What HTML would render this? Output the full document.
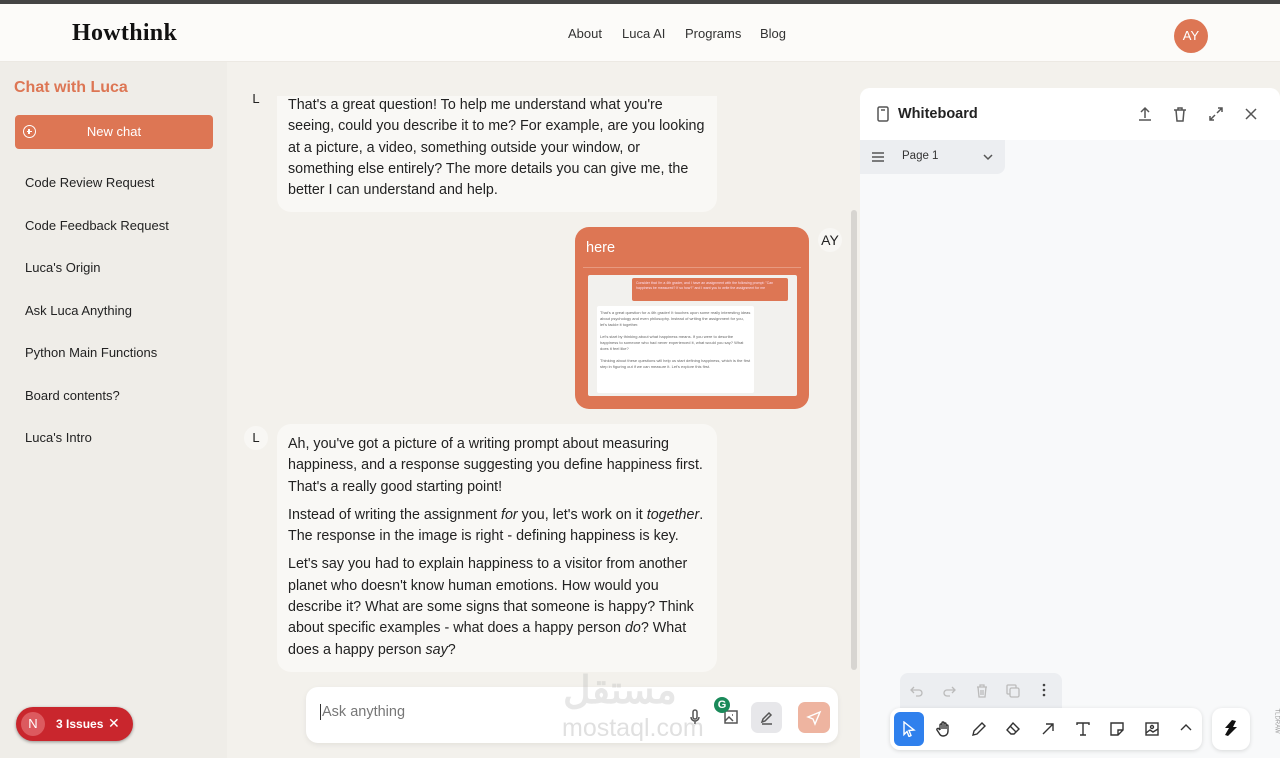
<!DOCTYPE html>
<html><head><meta charset="utf-8"><style>
*{margin:0;padding:0;box-sizing:border-box}
body{width:1280px;height:758px;overflow:hidden;font-family:"Liberation Sans",sans-serif;background:#f3f1ec;position:relative;color:#222}
.top{position:absolute;left:0;top:0;width:1280px;height:62px;background:#fcfbf9;border-top:4px solid #444;border-bottom:1px solid #ece9e3}
.logo{position:absolute;left:72px;top:16px;font-family:"Liberation Serif",serif;font-weight:bold;font-size:24px;letter-spacing:0.3px;color:#111}
.nav{position:absolute;top:22px;font-size:13px;color:#333}
.av{position:absolute;left:1174px;top:15px;width:34px;height:34px;border-radius:50%;background:#dd7654;color:#fff;font-size:13px;text-align:center;line-height:34px}
.side{position:absolute;left:0;top:62px;width:227px;height:696px;background:#efede8}
.side h2{position:absolute;left:14px;top:17px;font-size:16px;color:#dd7654;font-weight:bold}
.nc{position:absolute;left:15px;top:53px;width:198px;height:34px;background:#dd7654;border-radius:4px;color:#fff;font-size:13px;line-height:34px;text-align:center}
.nc i{position:absolute;left:8px;top:10px;width:13px;height:13px;border:1.5px solid #fff;border-radius:50%}
.nc i:before{content:"";position:absolute;left:2.5px;top:4.5px;width:5px;height:1.5px;background:#fff}
.nc i:after{content:"";position:absolute;left:4.3px;top:2.7px;width:1.5px;height:5px;background:#fff}
.it{position:absolute;left:25px;font-size:13px;color:#222}
.bub{position:absolute;background:#f9f8f5;border-radius:14px;font-size:14.3px;line-height:21.3px;color:#222;padding:0 11px}
.bub p{margin-bottom:7px}
.L{position:absolute;width:24px;height:24px;border-radius:50%;background:#f8f7f4;font-size:13px;text-align:center;line-height:24px}
.wb{position:absolute;left:860px;top:88px;width:420px;height:670px;background:#f8f9fa;border-radius:10px 10px 0 0}
.wbh{height:52px;background:#fff;border-radius:10px 10px 0 0;position:relative}
.ic{position:absolute;stroke:#555;fill:none;stroke-width:1.5}
.tb{position:absolute;top:13px;stroke:#333;fill:none;stroke-width:1.4}
.ut{position:absolute;top:11px;stroke:#bbb;fill:none;stroke-width:1.3}
</style></head><body>
<div class="top">
<div class="logo">Howthink</div>
<div class="nav" style="left:568px">About</div>
<div class="nav" style="left:622px">Luca AI</div>
<div class="nav" style="left:685px">Programs</div>
<div class="nav" style="left:760px">Blog</div>
<div class="av">AY</div>
</div>
<div class="side">
<h2>Chat with Luca</h2>
<div class="nc"><i></i>New chat</div>
<div class="it" style="top:113px">Code Review Request</div>
<div class="it" style="top:156px">Code Feedback Request</div>
<div class="it" style="top:198px">Luca's Origin</div>
<div class="it" style="top:241px">Ask Luca Anything</div>
<div class="it" style="top:283px">Python Main Functions</div>
<div class="it" style="top:326px">Board contents?</div>
<div class="it" style="top:368px">Luca's Intro</div>
<div style="position:absolute;left:16px;top:645px;width:117px;height:34px;border-radius:17px;background:#c9262d;box-shadow:0 1px 3px #0006;color:#fff;font-size:12px">
<div style="position:absolute;left:5px;top:5px;width:24px;height:24px;border-radius:50%;background:#dc5a5f;text-align:center;line-height:24px;font-size:13px">N</div>
<div style="position:absolute;left:40px;top:10px;font-weight:bold">3 Issues</div>
<div style="position:absolute;left:92px;top:8px;font-size:14px">✕</div></div>
</div>
<div style="position:absolute;left:851px;top:210px;width:6px;height:460px;background:#d7d5d1;border-radius:3px"></div>
<div class="bub" style="left:277px;top:62px;width:440px;height:150px;border-radius:0 0 14px 14px;padding-top:33px">That's a great question! To help me understand what you're seeing, could you describe it to me? For example, are you looking at a picture, a video, something outside your window, or something else entirely? The more details you can give me, the better I can understand and help.</div>
<div style="position:absolute;left:277px;top:62px;width:440px;height:34px;background:#f3f1ec"></div>
<div class="L" style="left:244px;top:87px;background:none">L</div>
<div style="position:absolute;left:575px;top:227px;width:234px;height:182px;background:#dd7654;border-radius:14px">
<div style="position:absolute;left:11px;top:13px;color:#fff;font-size:14.5px">here</div>
<div style="position:absolute;left:8px;top:40px;width:218px;height:1px;background:#e79a80"></div>
<div style="position:absolute;left:13px;top:48px;width:209px;height:121px;background:#f2f1ee;border-radius:2px">
<div style="position:absolute;left:44px;top:3px;width:156px;height:23px;background:#dd7654;border-radius:2px;font-size:3.5px;line-height:5px;color:#fde;padding:3px 4px">Consider that I'm a 4th grader, and I have an assignment with the following prompt: "Can happiness be measured? If so how?" and I want you to write the assignment for me</div>
<div style="position:absolute;left:9px;top:31px;width:157px;height:87px;background:#fff;border-radius:2px;font-size:4px;line-height:6px;color:#666;padding:4px 3px">That's a great question for a 4th grader! It touches upon some really interesting ideas about psychology and even philosophy. Instead of writing the assignment for you, let's tackle it together.<br><br>Let's start by thinking about what happiness means. If you were to describe happiness to someone who had never experienced it, what would you say? What does it feel like?<br><br>Thinking about these questions will help us start defining happiness, which is the first step in figuring out if we can measure it. Let's explore this first.</div></div></div>
<div class="L" style="left:818px;top:228px;font-size:14px">AY</div>
<div class="L" style="left:244px;top:426px">L</div>
<div class="bub" style="left:277px;top:424px;width:440px;height:248px;padding-top:10px">
<p>Ah, you've got a picture of a writing prompt about measuring happiness, and a response suggesting you define happiness first. That's a really good starting point!</p>
<p>Instead of writing the assignment <i>for</i> you, let's work on it <i>together</i>. The response in the image is right - defining happiness is key.</p>
<p>Let's say you had to explain happiness to a visitor from another planet who doesn't know human emotions. How would you describe it? What are some signs that someone is happy? Think about specific examples - what does a happy person <i>do</i>? What does a happy person <i>say</i>?</p></div>
<div style="position:absolute;left:306px;top:687px;width:532px;height:56px;background:#fff;border-radius:12px;box-shadow:0 2px 6px #0001">
<div style="position:absolute;left:14px;top:17px;font-size:14.5px;color:#777;border-left:1px solid #333;padding-left:1px">Ask anything</div>
<svg class="ic" style="left:383px;top:22px" width="12" height="16" viewBox="0 0 12 16"><rect x="4" y="1" width="4" height="9" rx="2"/><path d="M2 8a4 4 0 008 0M6 12v3"/></svg>
<svg class="ic" style="left:418px;top:23px" width="14" height="14" viewBox="0 0 14 14"><rect x="1" y="1" width="12" height="12"/><path d="M1 11l4-4 4 4M8 5h1"/></svg>
<div style="position:absolute;left:445px;top:15px;width:31px;height:31px;background:#e7e7ea;border-radius:7px"></div>
<svg class="ic" style="left:453px;top:23px" width="16" height="16" viewBox="0 0 16 16"><path d="M3 12l1-3 6-6 2 2-6 6z M3 14h10"/></svg>
<div style="position:absolute;left:492px;top:15px;width:32px;height:31px;background:#eeb4a0;border-radius:7px"></div>
<svg style="position:absolute;left:500px;top:23px" width="16" height="16" viewBox="0 0 16 16" fill="none" stroke="#fff" stroke-width="1.4"><path d="M14 2L2 7l5 2 2 5z"/></svg>
<div style="position:absolute;left:408px;top:10px;width:16px;height:16px;border-radius:50%;background:#1a8a5a;color:#fff;font-size:11px;text-align:center;line-height:16px;font-weight:bold">G</div>
</div>
<div style="position:absolute;left:563px;top:668px;font-size:38px;color:#bbb;opacity:.35;font-weight:bold">مستقل</div>
<div style="position:absolute;left:562px;top:714px;font-size:25px;color:#bbb;opacity:.45">mostaql.com</div>
<div class="wb">
<div class="wbh">
<svg class="ic" style="left:16px;top:18px" width="14" height="16" viewBox="0 0 14 16"><rect x="2" y="1" width="10" height="14" rx="1.5"/><path d="M5 4h4"/></svg>
<div style="position:absolute;left:38px;top:18px;font-weight:bold;font-size:14.5px;color:#222">Whiteboard</div>
<svg class="ic" style="left:278px;top:18px" width="14" height="16" viewBox="0 0 14 16"><path d="M7 12V2M3 6l4-4 4 4M1 14h12"/></svg>
<svg class="ic" style="left:313px;top:18px" width="14" height="16" viewBox="0 0 14 16"><path d="M1 4h12M5 4V2h4v2M3 4l1 11h6l1-11"/></svg>
<svg class="ic" style="left:349px;top:19px" width="14" height="14" viewBox="0 0 14 14"><path d="M8 6l5-5M9 1h4v4M6 8l-5 5M1 9v4h4"/></svg>
<svg class="ic" style="left:385px;top:20px" width="12" height="12" viewBox="0 0 12 12"><path d="M1 1l10 10M11 1L1 11"/></svg>
</div>
<div style="position:absolute;left:0;top:52px;width:145px;height:34px;background:#eceef1;border-radius:0 0 8px 0">
<svg class="ic" style="left:12px;top:12px" width="12" height="10" viewBox="0 0 12 10"><path d="M0 1h12M0 5h12M0 9h12"/></svg>
<div style="position:absolute;left:42px;top:10px;font-size:11.5px;color:#333">Page 1</div>
<svg class="ic" style="left:123px;top:14px" width="10" height="7" viewBox="0 0 10 7"><path d="M1 1l4 4 4-4"/></svg></div>
<div style="position:absolute;left:40px;top:585px;width:162px;height:35px;background:#eceef1;border-radius:8px 8px 0 0">
<svg class="ut" style="left:10px" width="14" height="14" viewBox="0 0 14 14"><path d="M4 3L1 6l3 3M1 6h8a3 3 0 010 6H6"/></svg>
<svg class="ut" style="left:42px" width="14" height="14" viewBox="0 0 14 14"><path d="M10 3l3 3-3 3M13 6H5a3 3 0 000 6h3"/></svg>
<svg class="ut" style="left:75px" width="14" height="14" viewBox="0 0 14 14"><path d="M2 3h10M5 3V1h4v2M3 3l1 10h6l1-10M6 6v5M8 6v5"/></svg>
<svg class="ut" style="left:106px" width="14" height="14" viewBox="0 0 14 14"><rect x="4" y="4" width="9" height="9" rx="1.5"/><path d="M10 4V2a1 1 0 00-1-1H2a1 1 0 00-1 1v7a1 1 0 001 1h2"/></svg>
<svg style="position:absolute;left:142px;top:10px" width="4" height="14" viewBox="0 0 4 14" fill="#444"><circle cx="2" cy="2" r="1.3"/><circle cx="2" cy="7" r="1.3"/><circle cx="2" cy="12" r="1.3"/></svg></div>
<div style="position:absolute;left:30px;top:620px;width:312px;height:42px;background:#fff;border-radius:10px;box-shadow:0 1px 4px #0002">
<div style="position:absolute;left:4px;top:4px;width:30px;height:34px;background:#2f80ed;border-radius:6px"></div>
<svg style="position:absolute;left:12px;top:13px" width="14" height="16" viewBox="0 0 14 16" fill="none" stroke="#fff" stroke-width="1.4"><path d="M2 1l10 8-5 .5 2 5-2 1-2-5-3 3z"/></svg>
<svg class="tb" style="left:46px" width="16" height="16" viewBox="0 0 16 16"><path d="M4 9V4a1 1 0 012 0v4M6 7V2a1 1 0 012 0v6M8 7V3a1 1 0 012 0v5M10 7V5a1 1 0 012 0v5c0 3-2 5-5 5-2 0-3-1-4-3L1 9a1 1 0 012-1l1 1"/></svg>
<svg class="tb" style="left:81px" width="16" height="16" viewBox="0 0 16 16"><path d="M2 14l1-4 8-8 3 3-8 8z"/></svg>
<svg class="tb" style="left:115px" width="16" height="16" viewBox="0 0 16 16"><path d="M8 2l6 6-5 5H6L2 9z M5 5l6 6"/></svg>
<svg class="tb" style="left:150px" width="16" height="16" viewBox="0 0 16 16"><path d="M3 13L13 3M6 3h7v7"/></svg>
<svg class="tb" style="left:185px" width="16" height="16" viewBox="0 0 16 16"><path d="M2 4V2h12v2M8 2v12M5 14h6"/></svg>
<svg class="tb" style="left:219px" width="16" height="16" viewBox="0 0 16 16"><path d="M14 9V2H2v12h7zM9 14v-5h5"/></svg>
<svg class="tb" style="left:254px" width="16" height="16" viewBox="0 0 16 16"><rect x="2" y="2" width="12" height="12"/><path d="M2 12l4-3 3 2 5-3"/><circle cx="8" cy="6" r="1.5"/></svg>
<svg class="tb" style="left:290px;top:16px" width="12" height="8" viewBox="0 0 12 8"><path d="M1 6l5-5 5 5"/></svg></div>
<div style="position:absolute;left:352px;top:620px;width:38px;height:42px;background:#fff;border-radius:10px;box-shadow:0 1px 4px #0002">
<svg style="position:absolute;left:11px;top:12px" width="16" height="18" viewBox="0 0 16 18" fill="#111"><path d="M9 0L2 8h4l-4 7 3 1 9-9H10l3-6z"/></svg></div>
<div style="position:absolute;left:404px;top:630px;font-size:6px;color:#999;transform:rotate(90deg)">TLDRAW</div>
</div>
</body></html>
